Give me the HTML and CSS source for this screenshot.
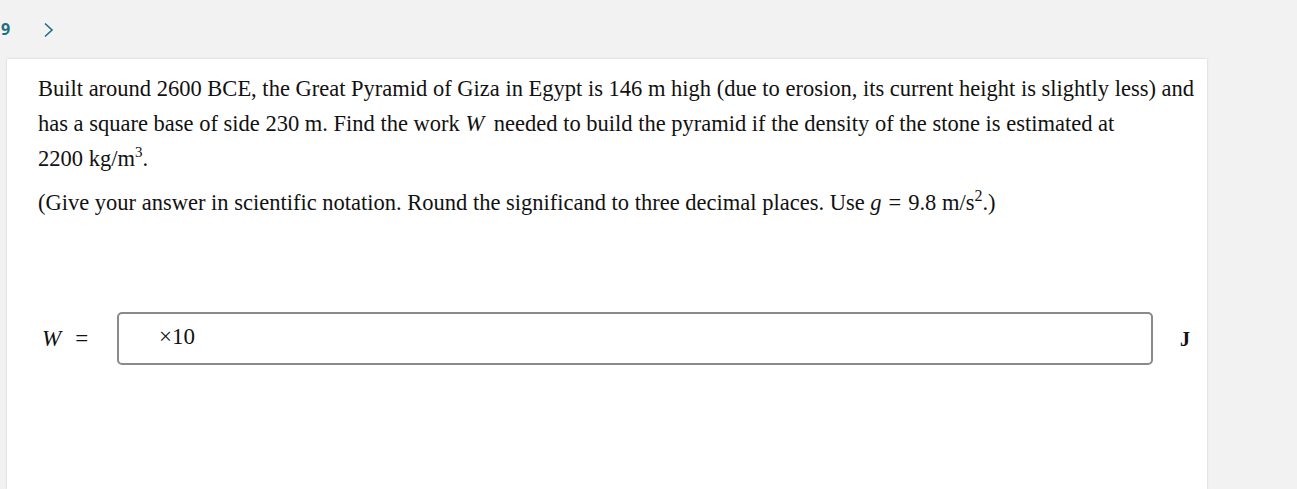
FILE: index.html
```html
<!DOCTYPE html>
<html>
<head>
<meta charset="utf-8">
<link rel="stylesheet" href="styles.css">
</head>
<body>
<div class="topbar">
  <span class="qnum">9</span>
  <svg class="chev" width="12" height="16" viewBox="0 0 12 16"><path d="M2 1.5 L9 8 L2 14.5" fill="none" stroke="#1b6f80" stroke-width="1.6"/></svg>
</div>
<div class="card">
  <p class="para">Built around 2600 BCE, the Great Pyramid of Giza in Egypt is 146 m high (due to erosion, its current height is slightly less) and has a square base of side 230 m. Find the work <i class="mv mw">W</i> needed to build the pyramid if the density of the stone is estimated at 2200&nbsp;kg/m<sup class="sup">3</sup>.</p>
  <p class="para para2">(Give your answer in scientific notation. Round the significand to three decimal places. Use <i class="mv">g</i><span class="eq">=</span>9.8&nbsp;m/s<sup class="msup">2</sup>.)</p>
  <div class="answer">
    <div class="lhs"><i class="mv">W</i><span class="eq">=</span></div>
    <div class="box"><span class="times">×10</span></div>
    <div class="unit">J</div>
  </div>
</div>
</body>
</html>
```
FILE: styles.css
```css
html, body {
  margin: 0;
  padding: 0;
  background: #f2f2f2;
  height: 100%;
}
body {
  font-family: "Liberation Serif", "Times New Roman", serif;
  color: #111;
  overflow: hidden;
}
.topbar {
  height: 59px;
  display: flex;
  align-items: center;
  box-sizing: border-box;
}
.qnum {
  font-family: "Open Sans", "DejaVu Sans", sans-serif;
  font-weight: 700;
  font-size: 16px;
  color: #1b6f80;
  margin-left: 1px;
  margin-top: -2px;
}
.chev {
  margin-left: 33px;
  margin-top: 1px;
}
.card {
  margin-left: 7px;
  width: 1200px;
  height: 430px;
  background: #fff;
  box-shadow: 0 0 2px rgba(0,0,0,0.18);
  padding: 12px 6px 0 31px;
  box-sizing: border-box;
}
.para {
  margin: 0;
  font-size: 22.5px;
  line-height: 35px;
}
.para2 {
  margin-top: 9px;
}
.mv {
  font-style: italic;
}
.mw {
  margin-right: 4px;
}
.sup {
  font-size: 15px;
  vertical-align: 9px;
  line-height: 0;
}
.msup {
  font-size: 16px;
  vertical-align: 9px;
  line-height: 0;
}
.eq {
  margin: 0 7px;
}
.answer {
  display: flex;
  align-items: center;
  margin-top: 92px;
}
.lhs {
  font-size: 23px;
  width: 79px;
  padding-left: 4px;
  box-sizing: border-box;
}
.lhs .eq {
  margin: 0 0 0 14px;
}
.box {
  width: 1036px;
  height: 53px;
  box-sizing: border-box;
  border: 2px solid #8a8a8a;
  border-radius: 5px;
  display: flex;
  align-items: center;
  padding-left: 40px;
  padding-bottom: 4px;
  font-size: 23px;
}
.unit {
  font-size: 20px;
  font-weight: 700;
  margin-left: 27px;
  margin-top: 2px;
}
```
